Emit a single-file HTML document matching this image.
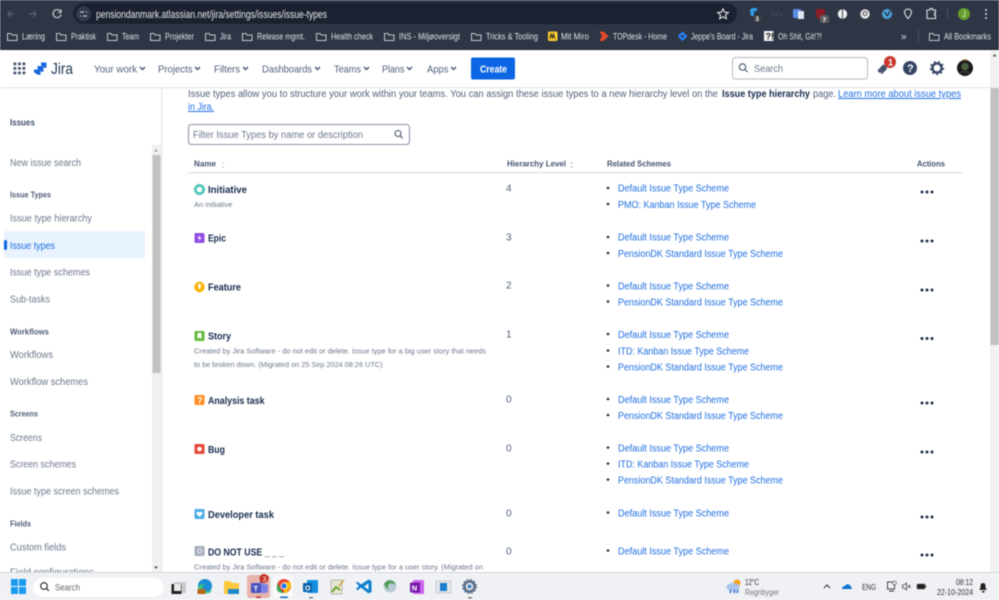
<!DOCTYPE html>
<html><head><meta charset="utf-8"><title>Issue types - Jira</title>
<style>
html,body{margin:0;padding:0;width:999px;height:600px;overflow:hidden;background:#fff}
svg{display:block;filter:blur(.4px)}
text{font-family:"Liberation Sans",sans-serif}
.bm{font-size:9px;fill:#dfe1e5}
.nav{font-size:10.5px;fill:#505f79}
.side{font-size:10px;fill:#6b778c}
.sh{font-size:8.5px;font-weight:bold;fill:#505f79}
.nm{font-size:10px;font-weight:bold;fill:#172b4d}
.ds{font-size:7.5px;fill:#6b778c}
.tx{font-size:10px;fill:#505f79}
.lk{font-size:10px;fill:#1f6fe0}
.th{font-size:8px;font-weight:bold;fill:#44546f}
.fo{fill:none;stroke:#c4c7cc;stroke-width:1}
</style></head><body>
<svg width="999" height="600" viewBox="0 0 999 600" xmlns="http://www.w3.org/2000/svg">
<defs>
<path id="f" class="fo" d="M.5 1.500h3.500l1 1.500h5v5.500h-9.500z"/>
<g id="ch"><path d="M0 0l2.500 2.500L5 0" fill="none" stroke="#44546f" stroke-width="1.400"/></g>
<g id="dots"><circle cx="0" cy="0" r="1.500" fill="#22304a"/><circle cx="5" cy="0" r="1.500" fill="#22304a"/><circle cx="10" cy="0" r="1.500" fill="#22304a"/></g>
</defs>
<rect width="999" height="600" fill="#fff"/>

<!-- Chrome -->
<rect width="999" height="50" fill="#2e3545"/>
<rect y="49" width="999" height="1" fill="#20242e"/>
<rect x="73" y="3" width="664" height="21" rx="10.500" fill="#1b2130"/>
<path d="M14 14h-6m2.500-3L8 14l2.500 3" fill="none" stroke="#5c6270" stroke-width="1.200"/>
<path d="M29 14h7m-2.500-3l2.500 3-2.500 3" fill="none" stroke="#5c6270" stroke-width="1.200"/>
<path d="M60.500 11.500a4 4 0 1 0 .5 3M61 9.500v3h-3" fill="none" stroke="#d5d7db" stroke-width="1.100"/>
<circle cx="83.500" cy="14" r="7.500" fill="#333a4a"/>
<path d="M80 12h4m2 0h1M80 16h1m2 0h4" stroke="#dfe1e5" stroke-width="1"/>
<text x="96" y="18" font-size="11" fill="#e8eaed" textLength="231" lengthAdjust="spacingAndGlyphs">pensiondanmark.atlassian.net/jira/settings/issues/issue-types</text>
<path d="M723 8.800l1.600 3.400 3.700.4-2.800 2.500.8 3.600-3.300-1.900-3.300 1.900.8-3.600-2.800-2.500 3.700-.4z" fill="none" stroke="#e3e5e8" stroke-width="1.100"/>
<!-- extensions -->
<path d="M750 11q0-3 4-3h3v3h-3v5h-3z" fill="#2f9fe8"/><rect x="753" y="15" width="9" height="7" rx="2" fill="#3c3f46"/><text x="755.500" y="21" font-size="6" font-weight="bold" fill="#fff">3</text>
<text x="771" y="17" font-size="8" fill="#555c6a">&lt;/&gt;</text>
<rect x="793" y="9" width="8" height="9" rx="1" fill="#5a8de8"/><rect x="798" y="11" width="6" height="8" fill="#dfe5f2"/>
<path d="M816 9h9v5q0 4-4.500 5.500Q816 18 816 14z" fill="#8c1c26"/><rect x="820" y="15" width="9" height="8" rx="2" fill="#5b5d62"/><text x="822.500" y="22" font-size="6.500" font-weight="bold" fill="#fff">7</text>
<circle cx="842.500" cy="14" r="4.700" fill="#eef0f2"/><path d="M842.500 9.500v9" stroke="#444" stroke-width="1"/>
<circle cx="865" cy="14" r="4.700" fill="#e5e5e5"/><circle cx="865" cy="13.500" r="2" fill="none" stroke="#555" stroke-width="1"/>
<circle cx="887" cy="14" r="5" fill="#4da3dc"/><path d="M884.500 12l3 4 2.500-5" fill="none" stroke="#1b2130" stroke-width="1.100"/>
<path d="M908 18.500q-3.500-4-3.500-6a3.500 3.500 0 0 1 7 0q0 2-3.500 6z" fill="none" stroke="#dfe1e5" stroke-width="1.100"/>
<path d="M927 10h3v-1.500h2.500V10h3v3h-1v2h1v3.500h-8.500z" fill="none" stroke="#dfe1e5" stroke-width="1.100"/>
<rect x="947" y="9" width="1" height="10" fill="#4d5464"/>
<circle cx="964" cy="14" r="6" fill="#66a02c"/><text x="962" y="17" font-size="8" fill="#dfe8cf">J</text>
<circle cx="986" cy="10" r="1" fill="#dfe1e5"/><circle cx="986" cy="14" r="1" fill="#dfe1e5"/><circle cx="986" cy="18" r="1" fill="#dfe1e5"/>
<!-- bookmarks -->
<use href="#f" x="7" y="32"/><text class="bm" x="22" y="39.500" textLength="23" lengthAdjust="spacingAndGlyphs">Læring</text>
<use href="#f" x="56" y="32"/><text class="bm" x="71" y="39.500" textLength="25" lengthAdjust="spacingAndGlyphs">Praktisk</text>
<use href="#f" x="107" y="32"/><text class="bm" x="122" y="39.500" textLength="17" lengthAdjust="spacingAndGlyphs">Team</text>
<use href="#f" x="150" y="32"/><text class="bm" x="165" y="39.500" textLength="29" lengthAdjust="spacingAndGlyphs">Projekter</text>
<use href="#f" x="205" y="32"/><text class="bm" x="220" y="39.500" textLength="11" lengthAdjust="spacingAndGlyphs">Jira</text>
<use href="#f" x="242" y="32"/><text class="bm" x="257" y="39.500" textLength="48" lengthAdjust="spacingAndGlyphs">Release mgmt.</text>
<use href="#f" x="316" y="32"/><text class="bm" x="331" y="39.500" textLength="42" lengthAdjust="spacingAndGlyphs">Health check</text>
<use href="#f" x="384" y="32"/><text class="bm" x="399" y="39.500" textLength="61" lengthAdjust="spacingAndGlyphs">INS - Miljøoversigt</text>
<use href="#f" x="471" y="32"/><text class="bm" x="486" y="39.500" textLength="52" lengthAdjust="spacingAndGlyphs">Tricks &amp; Tooling</text>
<rect x="548" y="31.500" width="9.500" height="9.500" rx="1.500" fill="#ffd02f"/><path d="M550 39l1-5 1.500 4 1-4 1.500 5" fill="none" stroke="#222" stroke-width="1"/>
<text class="bm" x="561" y="39.500" textLength="28" lengthAdjust="spacingAndGlyphs">Mit Miro</text>
<path d="M599.500 31.500h4l5 4.500-5 5h-4l2.500-5z" fill="#e2492b"/>
<text class="bm" x="613" y="39.500" textLength="54" lengthAdjust="spacingAndGlyphs">TOPdesk - Home</text>
<path d="M682.500 31.500l4.800 4.800-4.800 4.800-4.800-4.800z" fill="#2684ff"/><path d="M682.500 34.500l1.800 1.800-1.800 1.800-1.800-1.800z" fill="#2e3545"/>
<text class="bm" x="691" y="39.500" textLength="62" lengthAdjust="spacingAndGlyphs">Jeppe's Board - Jira</text>
<rect x="764" y="31" width="9.500" height="10" fill="#f2f2f2"/><text x="765.500" y="39.500" font-size="9" font-weight="bold" fill="#111">?!</text>
<text class="bm" x="778" y="39.500" textLength="44" lengthAdjust="spacingAndGlyphs">Oh Shit, Git!?!</text>
<text x="901" y="39.500" font-size="10" fill="#dfe1e5">»</text>
<rect x="918" y="30" width="1" height="12" fill="#4d5464"/>
<use href="#f" x="929" y="32"/><text class="bm" x="944" y="39.500" textLength="47" lengthAdjust="spacingAndGlyphs">All Bookmarks</text>

<!-- Main scrollbar -->
<rect x="990" y="50" width="9" height="522" fill="#f1f1f1"/>
<path d="M992.500 56.500l2-2.500 2 2.500z" fill="#505050"/>
<rect x="990.500" y="88" width="8.500" height="257" fill="#c1c1c1"/>

<!-- Jira nav -->
<rect x="0" y="87" width="990" height="1.500" fill="#ebecf0"/>
<g fill="#44546f"><rect x="13.500" y="62.500" width="2.800" height="2.800" rx=".6"/><rect x="18" y="62.500" width="2.800" height="2.800" rx=".6"/><rect x="22.500" y="62.500" width="2.800" height="2.800" rx=".6"/><rect x="13.500" y="67" width="2.800" height="2.800" rx=".6"/><rect x="18" y="67" width="2.800" height="2.800" rx=".6"/><rect x="22.500" y="67" width="2.800" height="2.800" rx=".6"/><rect x="13.500" y="71.500" width="2.800" height="2.800" rx=".6"/><rect x="18" y="71.500" width="2.800" height="2.800" rx=".6"/><rect x="22.500" y="71.500" width="2.800" height="2.800" rx=".6"/></g>
<g fill="#1868db"><path d="M41 62.500h5.500v5.500q-3.500-.2-5.500-3z"/><path d="M37.500 66h6v6q-4-.3-6-3.500z"/><path d="M34 69.500h6.500v5.500q-4.500-.3-6.500-3z"/></g>
<text x="51" y="74" font-size="15.500" fill="#253858" textLength="22" lengthAdjust="spacingAndGlyphs">Jira</text>
<text class="nav" x="94" y="72.500" textLength="43" lengthAdjust="spacingAndGlyphs">Your work</text><use href="#ch" x="140" y="67"/>
<text class="nav" x="158" y="72.500" textLength="34.500" lengthAdjust="spacingAndGlyphs">Projects</text><use href="#ch" x="195" y="67"/>
<text class="nav" x="214" y="72.500" textLength="26" lengthAdjust="spacingAndGlyphs">Filters</text><use href="#ch" x="243" y="67"/>
<text class="nav" x="262" y="72.500" textLength="50" lengthAdjust="spacingAndGlyphs">Dashboards</text><use href="#ch" x="315" y="67"/>
<text class="nav" x="334" y="72.500" textLength="27" lengthAdjust="spacingAndGlyphs">Teams</text><use href="#ch" x="364" y="67"/>
<text class="nav" x="382" y="72.500" textLength="22.500" lengthAdjust="spacingAndGlyphs">Plans</text><use href="#ch" x="407" y="67"/>
<text class="nav" x="427" y="72.500" textLength="21.500" lengthAdjust="spacingAndGlyphs">Apps</text><use href="#ch" x="451" y="67"/>
<rect x="471" y="57.500" width="44" height="22" rx="2" fill="#0c66e4"/>
<text x="480" y="72.500" font-size="10" font-weight="bold" fill="#fff" textLength="27" lengthAdjust="spacingAndGlyphs">Create</text>
<rect x="732.500" y="57.500" width="135" height="21.500" rx="3" fill="#fff" stroke="#b3bac5" stroke-width="1"/>
<circle cx="742.500" cy="67" r="3.200" fill="none" stroke="#44546f" stroke-width="1.100"/><path d="M745 69.500l2.500 2.500" stroke="#44546f" stroke-width="1.200"/>
<text x="754" y="72" font-size="10.500" fill="#6b778c" textLength="29" lengthAdjust="spacingAndGlyphs">Search</text>
<path d="M877.500 70.500l5.500-6 3.500 1 .5 3.500-5.500 5.500-1-2.500-1.500 1z" fill="#44546f"/>
<circle cx="890" cy="62" r="6" fill="#c9372c"/><text x="888" y="65.500" font-size="9" font-weight="bold" fill="#fff">1</text>
<circle cx="910" cy="68" r="7" fill="#344563"/><text x="907" y="72" font-size="11" font-weight="bold" fill="#fff">?</text>
<circle cx="937" cy="68" r="4.600" fill="none" stroke="#344563" stroke-width="2.400"/><circle cx="937" cy="68" r="6.500" fill="none" stroke="#344563" stroke-width="1.300" stroke-dasharray="2 2.500"/>
<circle cx="965" cy="68" r="8" fill="#1a1a1e"/><circle cx="965" cy="66.500" r="3.800" fill="#4a5f3d"/><path d="M959 73q6-5 12 0" fill="#303a36"/><path d="M962 60.500q3-1.300 6 0" stroke="#a66a22" fill="none"/>

<!-- Sidebar -->
<rect x="161" y="88" width="1.500" height="484" fill="#ebecf0"/>
<rect x="152" y="145" width="9" height="427" fill="#f1f1f1"/>
<path d="M154 151.500l2-2.500 2 2.500z" fill="#a0a0a0"/>
<rect x="152.500" y="155" width="8" height="218" fill="#c1c1c1"/>
<path d="M154 566.500l2 2.500 2-2.500z" fill="#505050"/>
<text x="10" y="125.500" font-size="9" font-weight="bold" fill="#44546f" textLength="25" lengthAdjust="spacingAndGlyphs">Issues</text>
<text class="side" x="10" y="166" textLength="71" lengthAdjust="spacingAndGlyphs">New issue search</text>
<text class="sh" x="10" y="197.500" textLength="41" lengthAdjust="spacingAndGlyphs">Issue Types</text>
<text class="side" x="10" y="221.500" textLength="82" lengthAdjust="spacingAndGlyphs">Issue type hierarchy</text>
<rect x="4" y="231" width="141" height="27" rx="2" fill="#e9f2ff"/>
<rect x="4" y="240" width="3" height="10" rx="1.500" fill="#0c66e4"/>
<text x="10" y="249" font-size="10" fill="#1f6fe0" textLength="45" lengthAdjust="spacingAndGlyphs">Issue types</text>
<text class="side" x="10" y="275.500" textLength="80" lengthAdjust="spacingAndGlyphs">Issue type schemes</text>
<text class="side" x="10" y="302.500" textLength="40" lengthAdjust="spacingAndGlyphs">Sub-tasks</text>
<text class="sh" x="10" y="334.500" textLength="39" lengthAdjust="spacingAndGlyphs">Workflows</text>
<text class="side" x="10" y="358" textLength="43" lengthAdjust="spacingAndGlyphs">Workflows</text>
<text class="side" x="10" y="385" textLength="78" lengthAdjust="spacingAndGlyphs">Workflow schemes</text>
<text class="sh" x="10" y="416.500" textLength="28" lengthAdjust="spacingAndGlyphs">Screens</text>
<text class="side" x="10" y="441" textLength="32" lengthAdjust="spacingAndGlyphs">Screens</text>
<text class="side" x="10" y="467.500" textLength="66" lengthAdjust="spacingAndGlyphs">Screen schemes</text>
<text class="side" x="10" y="494.500" textLength="109" lengthAdjust="spacingAndGlyphs">Issue type screen schemes</text>
<text class="sh" x="10" y="526.500" textLength="21" lengthAdjust="spacingAndGlyphs">Fields</text>
<text class="side" x="10" y="550.500" textLength="56" lengthAdjust="spacingAndGlyphs">Custom fields</text>
<text class="side" x="10" y="575.500" textLength="84" lengthAdjust="spacingAndGlyphs">Field configurations</text>

<!-- Main intro -->
<text class="tx" x="188" y="97" textLength="530" lengthAdjust="spacingAndGlyphs">Issue types allow you to structure your work within your teams. You can assign these issue types to a new hierarchy level on the</text>
<text x="722" y="97" font-size="10" font-weight="bold" fill="#172b4d" textLength="88" lengthAdjust="spacingAndGlyphs">Issue type hierarchy</text>
<text class="tx" x="813" y="97" textLength="23" lengthAdjust="spacingAndGlyphs">page.</text>
<text class="lk" x="838" y="97" textLength="123" lengthAdjust="spacingAndGlyphs" text-decoration="underline">Learn more about issue types</text>
<text class="lk" x="188" y="110" textLength="26" lengthAdjust="spacingAndGlyphs" text-decoration="underline">in Jira.</text>
<rect x="188.500" y="124.500" width="221" height="20" rx="3" fill="#fff" stroke="#8590a2" stroke-width="1"/>
<text x="193" y="138" font-size="10" fill="#6b778c" textLength="170" lengthAdjust="spacingAndGlyphs">Filter Issue Types by name or description</text>
<circle cx="398" cy="133.500" r="3" fill="none" stroke="#44546f" stroke-width="1.100"/><path d="M400.300 136l2.300 2.300" stroke="#44546f" stroke-width="1.200"/>

<!-- Table head -->
<text class="th" x="194" y="166.500" textLength="22" lengthAdjust="spacingAndGlyphs">Name</text>
<path d="M223 162.500v1m0 3v1" stroke="#97a0af" stroke-width="1.200"/>
<text class="th" x="507" y="166.500" textLength="59" lengthAdjust="spacingAndGlyphs">Hierarchy Level</text>
<path d="M571.500 162.500v1m0 3v1" stroke="#626f86" stroke-width="1.200"/>
<text class="th" x="607" y="166.500" textLength="64" lengthAdjust="spacingAndGlyphs">Related Schemes</text>
<text class="th" x="917" y="166.500" textLength="28" lengthAdjust="spacingAndGlyphs">Actions</text>
<rect x="188" y="172" width="775" height="1.300" fill="#dfe1e6"/>

<!-- Type icons -->
<circle cx="199.500" cy="189.500" r="4" fill="none" stroke="#4bc4b8" stroke-width="2.400"/><circle cx="199.500" cy="189.500" r="5.200" fill="none" stroke="#4bc4b8" stroke-width="1" stroke-dasharray="1.600 1.200"/>
<rect x="194.500" y="233" width="10" height="10" rx="1.200" fill="#904ee2"/><path d="M200 234.800l-2.500 3.700h2l-.5 2.800 2.500-3.800h-2z" fill="#fff"/>
<circle cx="199.500" cy="287" r="5.200" fill="#fcb100"/><path d="M199.500 283.800a1.800 1.800 0 0 1 1 3.200v2h-2v-2a1.800 1.800 0 0 1 1-3.200z" fill="#fff"/>
<rect x="194.500" y="331" width="10" height="10" rx="1.200" fill="#63ba3c"/><path d="M197.500 333h4v6l-2-1.500-2 1.500z" fill="#fff"/>
<rect x="194.500" y="395" width="10" height="10" rx="1.200" fill="#ff8b24"/><text x="197" y="403.500" font-size="9" font-weight="bold" fill="#fff">?</text>
<rect x="194.500" y="444" width="10" height="10" rx="1.200" fill="#e5493a"/><circle cx="199.500" cy="449" r="2.300" fill="#fff"/>
<rect x="194.500" y="509" width="10" height="10" rx="1.200" fill="#4bade8"/><path d="M199.500 517l-2.800-3q-.8-2 1-2.300 1.200-.1 1.800.9.600-1 1.800-.9 1.800.3 1 2.300z" fill="#fff"/>
<rect x="194.500" y="546" width="10" height="10" rx="1.200" fill="#a5adba"/><circle cx="199.500" cy="551" r="2" fill="none" stroke="#eef" stroke-width="1"/>

<!-- Names -->
<text class="nm" x="208" y="193" textLength="39" lengthAdjust="spacingAndGlyphs">Initiative</text>
<text class="ds" x="194" y="207" textLength="38.500" lengthAdjust="spacingAndGlyphs">An initiative</text>
<text class="nm" x="208" y="241.500" textLength="18" lengthAdjust="spacingAndGlyphs">Epic</text>
<text class="nm" x="208" y="290.500" textLength="33" lengthAdjust="spacingAndGlyphs">Feature</text>
<text class="nm" x="208" y="339.500" textLength="23" lengthAdjust="spacingAndGlyphs">Story</text>
<text class="ds" x="194" y="353.500" textLength="292" lengthAdjust="spacingAndGlyphs">Created by Jira Software - do not edit or delete. Issue type for a big user story that needs</text>
<text class="ds" x="194" y="367" textLength="188.500" lengthAdjust="spacingAndGlyphs">to be broken down. (Migrated on 25 Sep 2024 08:26 UTC)</text>
<text class="nm" x="208" y="404" textLength="56.500" lengthAdjust="spacingAndGlyphs">Analysis task</text>
<text class="nm" x="208" y="453" textLength="17" lengthAdjust="spacingAndGlyphs">Bug</text>
<text class="nm" x="208" y="518" textLength="66" lengthAdjust="spacingAndGlyphs">Developer task</text>
<text class="nm" x="208" y="555.500" textLength="76" lengthAdjust="spacingAndGlyphs">DO NOT USE _ _ _</text>
<text class="ds" x="194" y="569.500" textLength="289" lengthAdjust="spacingAndGlyphs">Created by Jira Software - do not edit or delete. Issue type for a user story. (Migrated on</text>

<!-- Levels -->
<g font-size="10" fill="#505f79" transform="translate(0,-.5)">
<text x="506" y="192">4</text><text x="506" y="241">3</text><text x="506" y="289">2</text><text x="506" y="338">1</text><text x="506" y="403">0</text><text x="506" y="452">0</text><text x="506" y="517">0</text><text x="506" y="555">0</text>
</g>

<!-- Schemes -->
<g transform="translate(0,-.5)">
<g fill="#172b4d">
<circle cx="608" cy="188.500" r="1.300"/><circle cx="608" cy="204.500" r="1.300"/><circle cx="608" cy="237.500" r="1.300"/><circle cx="608" cy="253.500" r="1.300"/><circle cx="608" cy="286" r="1.300"/><circle cx="608" cy="302" r="1.300"/><circle cx="608" cy="334.500" r="1.300"/><circle cx="608" cy="351" r="1.300"/><circle cx="608" cy="367" r="1.300"/><circle cx="608" cy="399.500" r="1.300"/><circle cx="608" cy="415.500" r="1.300"/><circle cx="608" cy="448" r="1.300"/><circle cx="608" cy="464" r="1.300"/><circle cx="608" cy="480" r="1.300"/><circle cx="608" cy="513" r="1.300"/><circle cx="608" cy="551" r="1.300"/>
</g>
<text class="lk" x="618" y="192" textLength="111" lengthAdjust="spacingAndGlyphs">Default Issue Type Scheme</text>
<text class="lk" x="618" y="208.500" textLength="138" lengthAdjust="spacingAndGlyphs">PMO: Kanban Issue Type Scheme</text>
<text class="lk" x="618" y="241" textLength="111" lengthAdjust="spacingAndGlyphs">Default Issue Type Scheme</text>
<text class="lk" x="618" y="257.500" textLength="165" lengthAdjust="spacingAndGlyphs">PensionDK Standard Issue Type Scheme</text>
<text class="lk" x="618" y="290" textLength="111" lengthAdjust="spacingAndGlyphs">Default Issue Type Scheme</text>
<text class="lk" x="618" y="306" textLength="165" lengthAdjust="spacingAndGlyphs">PensionDK Standard Issue Type Scheme</text>
<text class="lk" x="618" y="338.500" textLength="111" lengthAdjust="spacingAndGlyphs">Default Issue Type Scheme</text>
<text class="lk" x="618" y="355" textLength="131" lengthAdjust="spacingAndGlyphs">ITD: Kanban Issue Type Scheme</text>
<text class="lk" x="618" y="371" textLength="165" lengthAdjust="spacingAndGlyphs">PensionDK Standard Issue Type Scheme</text>
<text class="lk" x="618" y="403.500" textLength="111" lengthAdjust="spacingAndGlyphs">Default Issue Type Scheme</text>
<text class="lk" x="618" y="419.500" textLength="165" lengthAdjust="spacingAndGlyphs">PensionDK Standard Issue Type Scheme</text>
<text class="lk" x="618" y="452" textLength="111" lengthAdjust="spacingAndGlyphs">Default Issue Type Scheme</text>
<text class="lk" x="618" y="468" textLength="131" lengthAdjust="spacingAndGlyphs">ITD: Kanban Issue Type Scheme</text>
<text class="lk" x="618" y="484" textLength="165" lengthAdjust="spacingAndGlyphs">PensionDK Standard Issue Type Scheme</text>
<text class="lk" x="618" y="517" textLength="111" lengthAdjust="spacingAndGlyphs">Default Issue Type Scheme</text>
<text class="lk" x="618" y="555" textLength="111" lengthAdjust="spacingAndGlyphs">Default Issue Type Scheme</text>
</g>

<!-- Actions -->
<use href="#dots" x="922" y="192"/><use href="#dots" x="922" y="241"/><use href="#dots" x="922" y="290"/><use href="#dots" x="922" y="338.500"/><use href="#dots" x="922" y="403"/><use href="#dots" x="922" y="452"/><use href="#dots" x="922" y="517"/><use href="#dots" x="922" y="555"/>

<!-- Taskbar -->
<rect x="0" y="572" width="999" height="28" fill="#eff1f4"/>
<rect x="0" y="572" width="999" height="1" fill="#d4d6d8"/>
<g fill="#1b9bef"><rect x="11" y="579" width="7" height="7"/><rect x="19" y="579" width="7" height="7"/><rect x="11" y="587" width="7" height="7"/><rect x="19" y="587" width="7" height="7"/></g>
<rect x="33.500" y="578" width="130" height="19" rx="9.500" fill="#fff"/>
<circle cx="44" cy="586" r="3.300" fill="none" stroke="#222" stroke-width="1.100"/><path d="M46.500 588.500l2.300 2.300" stroke="#222" stroke-width="1.200"/>
<text x="55" y="590.500" font-size="9" fill="#666" textLength="25" lengthAdjust="spacingAndGlyphs">Search</text>
<rect x="174" y="582" width="12" height="11" fill="#c9c9c9"/><rect x="171.500" y="584" width="10" height="10" fill="#222"/><rect x="174" y="584" width="7" height="7" fill="#e8e8e8"/>
<circle cx="205" cy="586" r="7" fill="#1b8dd4"/><path d="M198 587q2 7 8 6.500 4 0 6-3-7 2-9-1-2-3 2-5-5-1-7 2.500z" fill="#3cc67a"/><rect x="197.500" y="589" width="8" height="5" fill="#b8651b"/>
<path d="M224 581h6l2 2h7v11h-15z" fill="#ffc83d"/><rect x="228" y="589" width="11" height="5" fill="#1d87c9"/>
<rect x="247" y="575" width="23" height="23" rx="3" fill="#e8b4ae"/>
<circle cx="262" cy="581.500" r="2" fill="#5b60b8"/><rect x="256" y="584" width="12" height="9" rx="2" fill="#7b83eb"/><rect x="251" y="583" width="10" height="10" rx="1" fill="#4b53bc"/><text x="253.500" y="591" font-size="7.500" font-weight="bold" fill="#fff">T</text>
<circle cx="264" cy="578.500" r="4.500" fill="#c42b1c"/><text x="262.300" y="581.500" font-size="7.500" fill="#fff">3</text>
<rect x="256" y="596.500" width="5" height="1.500" rx=".7" fill="#c42b1c"/>
<rect x="273" y="575" width="20" height="23" rx="3" fill="#f9f9fa"/>
<circle cx="284" cy="586" r="7" fill="#ea4335"/><path d="M277.500 583l3.500 7 3 3q-6 .5-7.300-4z" fill="#34a853"/><path d="M284 582h6.500q1.500 4-1 7.500L286 593h-2z" fill="#fbbc05"/><circle cx="284" cy="586" r="3.300" fill="#fff"/><circle cx="284" cy="586" r="2.500" fill="#1a73e8"/>
<rect x="280" y="596.500" width="8" height="1.500" rx=".7" fill="#0f6cbd"/>
<rect x="307" y="580" width="11" height="13" rx="1" fill="#1490df"/><rect x="303" y="583" width="9" height="9" rx="1" fill="#0a5fa8"/><text x="305" y="590.500" font-size="7" font-weight="bold" fill="#fff">O</text>
<rect x="309" y="597" width="4" height="1.500" rx=".7" fill="#777"/>
<rect x="331" y="580" width="11" height="14" fill="#e8e4d2" stroke="#9a9a8a" stroke-width=".6"/><path d="M332 592l4-5 4 3" fill="none" stroke="#6aa52f" stroke-width="2"/><path d="M344 580l-5 6" stroke="#c8a53a" stroke-width="1.400"/>
<path d="M368.500 579.500l3 1.500v11l-3 1.500-7.500-6-3.500 2.700-1.500-1 3-3.200-3-3.200 1.500-1 3.500 2.700zm0 3.700l-4.500 3.300 4.500 3.300z" fill="#0f7fce"/>
<circle cx="390" cy="586" r="6.500" fill="#b9ccd6"/><path d="M384 584q4-5 8-3 3 1 3 4-3-3-6-1-2 2 0 5-3 0-5-5z" fill="#4f9f53"/>
<rect x="413" y="580" width="11" height="14" rx="1" fill="#ca64ea"/><rect x="410" y="582.500" width="10" height="10" rx="1" fill="#7719aa"/><text x="411.800" y="590.500" font-size="7.500" font-weight="bold" fill="#fff">N</text>
<rect x="436" y="581" width="15" height="12" fill="#e3e6ea" stroke="#b5b9bf" stroke-width=".6"/><rect x="440" y="583" width="7" height="8" fill="#1c7ed0"/>
<circle cx="469.500" cy="586.500" r="5" fill="none" stroke="#5b6f8a" stroke-width="2.600"/><circle cx="469.500" cy="586.500" r="6.800" fill="none" stroke="#5b6f8a" stroke-width="1.300" stroke-dasharray="2 1.600"/><circle cx="469.500" cy="586.500" r="2" fill="#3b7fc4"/>
<rect x="468" y="597" width="4" height="1.500" rx=".7" fill="#777"/>
<!-- tray -->
<circle cx="737" cy="583" r="3.500" fill="#f5a11c"/><ellipse cx="733" cy="587" rx="6.500" ry="4" fill="#a8c4ec"/><path d="M731 590l-1 3m5-3l-1 3m4-3l-1 3" stroke="#2c6bd1" stroke-width="1.500"/>
<text x="745" y="585" font-size="8.500" fill="#333" textLength="14" lengthAdjust="spacingAndGlyphs">12°C</text>
<text x="745" y="595" font-size="8.500" fill="#777" textLength="34" lengthAdjust="spacingAndGlyphs">Regnbyger</text>
<path d="M824 588l3-3 3 3" fill="none" stroke="#333" stroke-width="1"/>
<path d="M842 589q0-3 3-3 1-2.500 3.500-1.500 2 .5 2 2 2 .5 1 2.500z" fill="#0f74d1"/>
<text x="862" y="590" font-size="8" fill="#333" textLength="14" lengthAdjust="spacingAndGlyphs">ENG</text>
<rect x="887.500" y="582" width="7" height="7" fill="none" stroke="#333" stroke-width=".9"/><path d="M889 591h5" stroke="#333"/><circle cx="894.500" cy="583" r="1.800" fill="#fff" stroke="#333" stroke-width=".7"/>
<path d="M902.500 585h1.500l2.500-2v7l-2.500-2h-1.500z" fill="none" stroke="#444" stroke-width=".8"/><path d="M908 585l2.500 3m0-3l-2.500 3" stroke="#444" stroke-width=".7"/>
<rect x="917" y="584" width="8" height="5" rx="1" fill="#222" stroke="#555" stroke-width=".6"/><rect x="925.200" y="585.500" width="1" height="2" fill="#333"/>
<text x="956" y="585" font-size="8.500" fill="#333" textLength="17" lengthAdjust="spacingAndGlyphs">08:12</text>
<text x="937" y="595" font-size="8.500" fill="#333" textLength="36" lengthAdjust="spacingAndGlyphs">22-10-2024</text>
<path d="M979 590q1.500-1 1.500-4 0-3 2.500-3t2.500 3q0 3 1.500 4z" fill="#222"/><rect x="982" y="591" width="2.500" height="1.500" fill="#222"/>
</svg>
</body></html>
